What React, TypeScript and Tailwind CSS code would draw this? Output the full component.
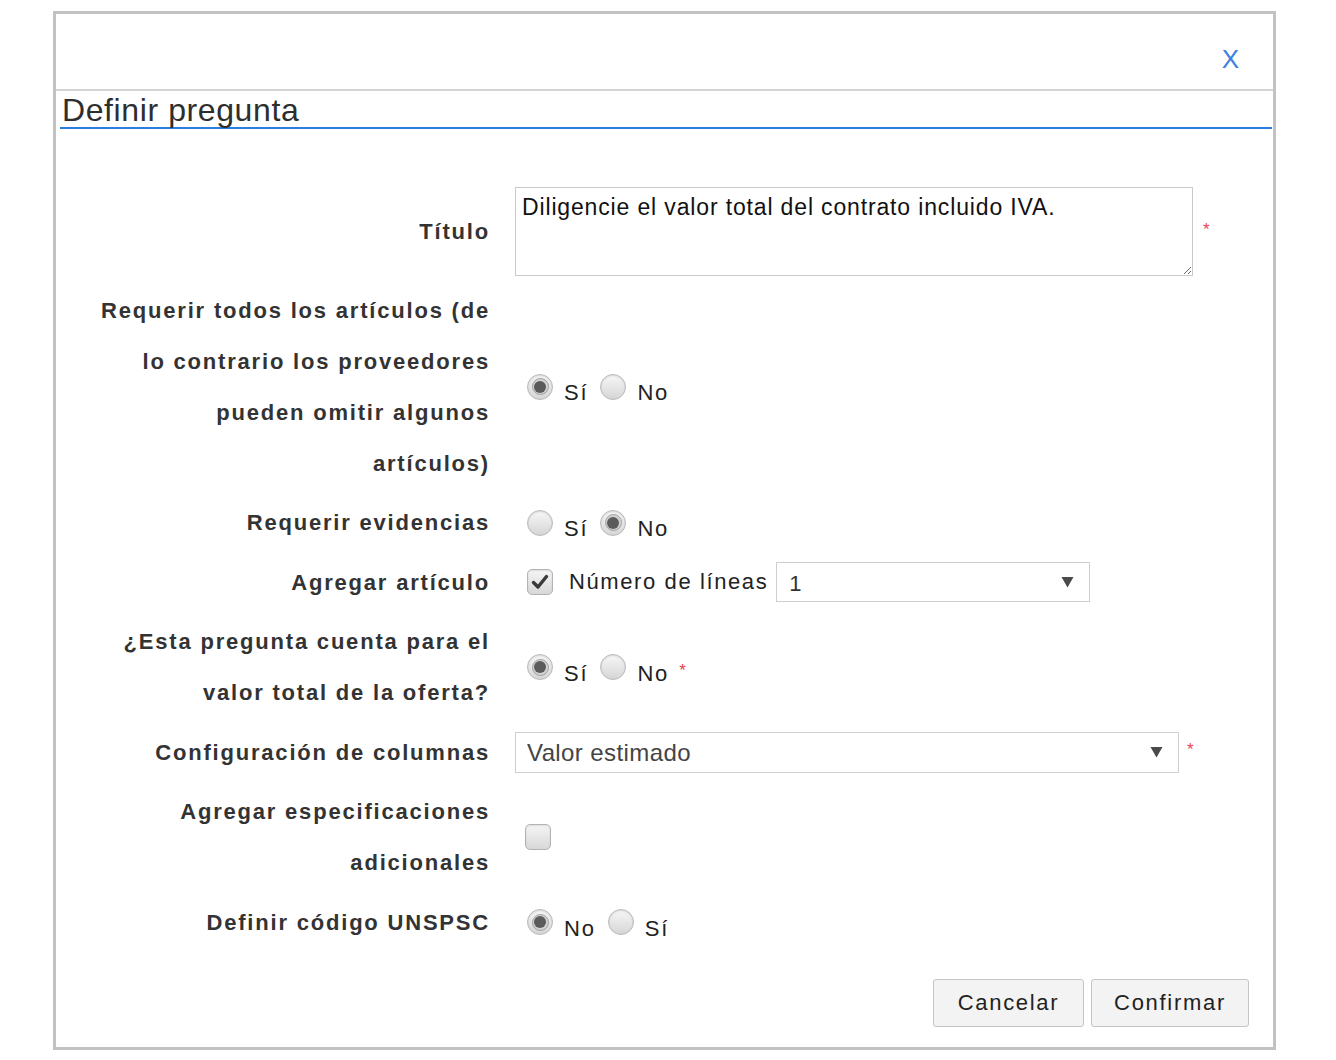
import React from "react";

const Radio = ({ checked }: { checked?: boolean }) => (
  <span className="inline-flex h-[26px] w-[26px] shrink-0 items-center justify-center rounded-full border border-[#b9b9b9] bg-linear-to-b from-[#f7f7f7] to-[#d6d6d6] shadow-[inset_0_1px_2px_rgba(0,0,0,0.12)]">
    {checked && (
      <span className="flex h-[17px] w-[17px] items-center justify-center rounded-full border border-[#a0a0a0] bg-[#d2d2d2]">
        <span className="h-[12px] w-[12px] rounded-full bg-[#5b5b5b]" />
      </span>
    )}
  </span>
);

const Checkbox = ({ checked }: { checked?: boolean }) => (
  <span className="inline-flex h-[26px] w-[26px] shrink-0 items-center justify-center rounded-[5px] border border-[#b3b3b3] bg-linear-to-b from-[#f5f5f5] to-[#d8d8d8] shadow-[inset_0_1px_2px_rgba(0,0,0,0.1)]">
    {checked && (
      <svg width="18" height="16" viewBox="0 0 18 16">
        <path d="M2.5 8.5 L7 13 L15.5 2.5" fill="none" stroke="#3a3a3a" strokeWidth="3.4" strokeLinecap="round" strokeLinejoin="round" />
      </svg>
    )}
  </span>
);

const Arrow = () => (
  <svg width="13" height="12" viewBox="0 0 13 12">
    <path d="M0.5 1 L12.5 1 L6.5 11.5 Z" fill="#4a4a4a" />
  </svg>
);

const Star = ({ cls = "" }: { cls?: string }) => (
  <span className={"text-[17px] leading-none text-[#e8434f] " + cls}>*</span>
);

const RadioGroup = ({
  items,
  star,
}: {
  items: { label: string; checked?: boolean }[];
  star?: boolean;
}) => (
  <div className="flex items-center pl-[12px]">
    {items.map((it, i) => (
      <div key={i} className={"flex items-center " + (i > 0 ? "ml-[12px]" : "")}>
        <Radio checked={it.checked} />
        <span className="ml-[11px] pt-[13px] text-[22px] leading-none tracking-[1.8px] text-[#222]">
          {it.label}
        </span>
      </div>
    ))}
    {star && <Star cls="ml-[10px] pt-[6px]" />}
  </div>
);

const Label = ({ lines }: { lines: string[] }) => (
  <div className="mr-[-2px] text-right text-[22px] font-bold leading-[51px] tracking-[1.8px] text-[#333]">
    {lines.map((l, i) => (
      <div key={i}>{l}</div>
    ))}
  </div>
);

export default function App() {
  const font = { fontFamily: '"Liberation Sans", Arial, sans-serif' };
  return (
    <div className="min-h-[1060px] w-[1336px] bg-white" style={font}>
      <div className="ml-[53px] mt-[11px] h-[1039px] w-[1223px] border-[3px] border-[#c2c2c2] bg-white">
        {/* top bar */}
        <div className="flex h-[77px] items-start justify-end border-b-[2px] border-[#d4d4d4] pr-[34px] pt-[32px]">
          <span className="text-[26px] leading-none text-[#3d7fe0]">X</span>
        </div>
        {/* title */}
        <div className="ml-[4px] mr-[1px] border-b-[2px] border-[#2a7de1] pt-[3px]">
          <div className="pl-[2px] text-[32px] leading-[33px] tracking-[0.6px] text-[#2e2e2e]">Definir pregunta</div>
        </div>

        {/* form */}
        <div className="mt-[58px] grid grid-cols-[432px_1fr] gap-x-[27px] gap-y-[8.5px]">
          {/* Titulo */}
          <div className="flex h-[88px] items-center justify-end">
            <Label lines={["Título"]} />
          </div>
          <div className="flex items-center">
            <textarea
              readOnly
              defaultValue="Diligencie el valor total del contrato incluido IVA."
              className="h-[89px] w-[678px] resize border border-[#c9c9c9] px-[6px] pt-[5px] text-[23px] leading-[28px] tracking-[0.85px] text-[#111] outline-none"
              style={font}
            />
            <Star cls="ml-[10px] mt-[-4px]" />
          </div>

          {/* Requerir todos */}
          <div className="flex items-center justify-end">
            <Label
              lines={[
                "Requerir todos los artículos (de",
                "lo contrario los proveedores",
                "pueden omitir algunos",
                "artículos)",
              ]}
            />
          </div>
          <div className="flex items-center">
            <RadioGroup items={[{ label: "Sí", checked: true }, { label: "No" }]} />
          </div>

          {/* Requerir evidencias */}
          <div className="flex items-center justify-end">
            <Label lines={["Requerir evidencias"]} />
          </div>
          <div className="flex items-center">
            <RadioGroup items={[{ label: "Sí" }, { label: "No", checked: true }]} />
          </div>

          {/* Agregar articulo */}
          <div className="flex items-center justify-end">
            <Label lines={["Agregar artículo"]} />
          </div>
          <div className="flex items-center pl-[12px]">
            <Checkbox checked />
            <span className="ml-[16px] text-[22px] leading-none tracking-[1.6px] text-[#222]">
              Número de líneas
            </span>
            <div className="ml-[8px] flex h-[40px] w-[314px] items-center justify-between border border-[#cfcfcf] pl-[12px] pr-[15px]">
              <span className="pt-[4px] text-[22px] leading-none text-[#333]">1</span>
              <Arrow />
            </div>
          </div>

          {/* Esta pregunta cuenta */}
          <div className="flex items-center justify-end">
            <Label lines={["¿Esta pregunta cuenta para el", "valor total de la oferta?"]} />
          </div>
          <div className="flex items-center">
            <RadioGroup items={[{ label: "Sí", checked: true }, { label: "No" }]} star />
          </div>

          {/* Configuracion de columnas */}
          <div className="flex items-center justify-end">
            <Label lines={["Configuración de columnas"]} />
          </div>
          <div className="flex items-center">
            <div className="flex h-[41px] w-[664px] items-center justify-between border border-[#cfcfcf] pl-[11px] pr-[15px]">
              <span className="pt-[1px] text-[24px] leading-none tracking-[0.4px] text-[#444]">Valor estimado</span>
              <Arrow />
            </div>
            <Star cls="ml-[8px] mt-[-6px]" />
          </div>

          {/* Agregar especificaciones */}
          <div className="flex items-center justify-end">
            <Label lines={["Agregar especificaciones", "adicionales"]} />
          </div>
          <div className="flex items-center pl-[10px]">
            <Checkbox />
          </div>

          {/* UNSPSC */}
          <div className="flex items-center justify-end">
            <Label lines={["Definir código UNSPSC"]} />
          </div>
          <div className="flex items-center">
            <RadioGroup items={[{ label: "No", checked: true }, { label: "Sí" }]} />
          </div>
        </div>

        {/* buttons */}
        <div className="mr-[24px] mt-[31px] flex justify-end gap-[7px]">
          <button className="h-[48px] w-[151px] rounded-[3px] border border-[#c4c4c4] bg-[#f3f3f3] text-[22px] tracking-[1.7px] text-[#222]" style={font}>
            Cancelar
          </button>
          <button className="h-[48px] w-[158px] rounded-[3px] border border-[#c4c4c4] bg-[#f3f3f3] text-[22px] tracking-[1.7px] text-[#222]" style={font}>
            Confirmar
          </button>
        </div>
      </div>
    </div>
  );
}
